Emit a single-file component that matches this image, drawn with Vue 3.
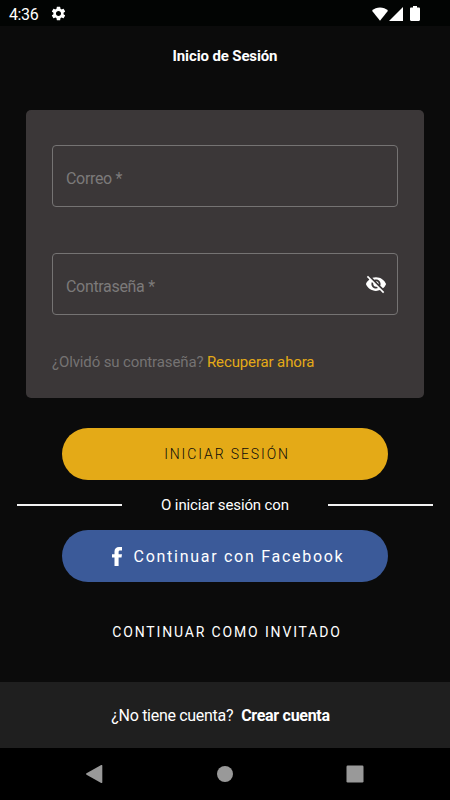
<template>
  <div class="screen">
    <header class="status-bar">
      <span class="time">4:36</span>
      <svg class="icon-settings" viewBox="0 0 24 24">
        <path d="M19.14 12.94c.04-.3.06-.61.06-.94 0-.32-.02-.64-.07-.94l2.03-1.58a.49.49 0 0 0 .12-.61l-1.92-3.32a.488.488 0 0 0-.59-.22l-2.39.96c-.5-.38-1.03-.7-1.62-.94l-.36-2.54a.484.484 0 0 0-.48-.41h-3.84c-.24 0-.43.17-.47.41l-.36 2.54c-.59.24-1.13.57-1.62.94l-2.39-.96c-.22-.08-.47 0-.59.22L2.74 8.87c-.12.21-.08.47.12.61l2.03 1.58c-.05.3-.09.63-.09.94s.02.64.07.94l-2.03 1.58a.49.49 0 0 0-.12.61l1.92 3.32c.12.22.37.29.59.22l2.39-.96c.5.38 1.03.7 1.62.94l.36 2.54c.05.24.24.41.48.41h3.84c.24 0 .44-.17.47-.41l.36-2.54c.59-.24 1.13-.56 1.62-.94l2.39.96c.22.08.47 0 .59-.22l1.92-3.32c.12-.22.07-.47-.12-.61l-2.01-1.58zM12 15.6c-1.98 0-3.6-1.62-3.6-3.6s1.62-3.6 3.6-3.6 3.6 1.62 3.6 3.6-1.62 3.6-3.6 3.6z" />
      </svg>
      <div class="indicators">
        <svg class="icon-wifi" viewBox="0 0 16 14"><path d="M8 13.7 0 3.8C2.2 1.6 5 .5 8 .5s5.800 1.100 8 3.300z" /></svg>
        <svg class="icon-signal" viewBox="0 0 14 14"><path d="M0 14 14 0v14z" /></svg>
        <svg class="icon-battery" viewBox="0 0 10 15"><path d="M3 0h4v1.500h1.800c.7 0 1.200.5 1.200 1.200v11.100c0 .7-.5 1.200-1.200 1.200H1.200C.5 15 0 14.500 0 13.800V2.700c0-.7.5-1.200 1.200-1.200H3z" /></svg>
      </div>
    </header>

    <h1 class="title">Inicio de Sesión</h1>

    <section class="card">
      <div v-for="field in fields" :key="field.name" class="field">
        <span class="field-label">{{ field.label }} *</span>
        <svg v-if="field.secret" class="icon-eye" viewBox="0 0 24 24">
          <path d="M12 7c2.760 0 5 2.240 5 5 0 .65-.13 1.260-.36 1.830l2.920 2.920c1.510-1.260 2.700-2.890 3.430-4.750-1.730-4.390-6-7.500-11-7.500-1.400 0-2.740.25-3.980.7l2.160 2.160C10.740 7.130 11.350 7 12 7zM2 4.270l2.280 2.280.46.46A11.804 11.804 0 0 0 1 12c1.730 4.390 6 7.500 11 7.500 1.550 0 3.030-.3 4.380-.84l.42.42L19.730 22 21 20.730 3.270 3 2 4.270zM7.530 9.800l1.550 1.550c-.05.21-.08.43-.08.65 0 1.660 1.340 3 3 3 .22 0 .44-.03.65-.08l1.550 1.550c-.67.33-1.410.53-2.200.53-2.760 0-5-2.240-5-5 0-.79.2-1.530.53-2.200zm4.310-.78 3.150 3.150.02-.16c0-1.660-1.340-3-3-3l-.17.01z" />
        </svg>
      </div>
      <p class="recover">¿Olvidó su contraseña? <a class="recover-link">Recuperar ahora</a></p>
    </section>

    <button class="btn btn-login">INICIAR SESIÓN</button>

    <div class="divider">
      <span class="line"></span>
      <span>O iniciar sesión con</span>
      <span class="line"></span>
    </div>

    <button class="btn btn-facebook">
      <svg class="icon-facebook" viewBox="0 0 10 19"><path d="M2.500 19V10.600H0V7.200h2.500V4.600C2.500 1.600 4.300 0 7 0h3v3.500H8.200c-1.200 0-1.600.6-1.600 1.500v2.200H10l-.5 3.400H6.600V19z" /></svg>
      <span>Continuar con Facebook</span>
    </button>

    <button class="guest">CONTINUAR COMO INVITADO</button>

    <footer class="register">
      <span>¿No tiene cuenta?</span>
      <a class="register-link">Crear cuenta</a>
    </footer>

    <nav class="nav-bar">
      <svg viewBox="0 0 18 18"><path d="M.5 8.300 15.200.1c.6-.3 1.100 0 1.100.6v16.600c0 .6-.5.900-1.100.6L.5 9.700c-.6-.4-.6-1 0-1.400z" /></svg>
      <svg viewBox="0 0 18 18"><circle cx="9" cy="9" r="8" /></svg>
      <svg viewBox="0 0 18 18"><rect x="0.500" y="0.500" width="17" height="17" rx="1.200" /></svg>
    </nav>
  </div>
</template>

<script setup>
const fields = [
  { name: 'email', label: 'Correo', secret: false },
  { name: 'password', label: 'Contraseña', secret: true }
];
</script>

<style>
body {
  margin: 0;
  background: #0b0b0b;
}
</style>

<style scoped>
.screen {
  display: flex;
  flex-direction: column;
  align-items: center;
  width: 450px;
  height: 800px;
  overflow: hidden;
  background: #0b0b0b;
  color: #fff;
  font-family: Roboto, sans-serif;
  font-size: 15px;
  letter-spacing: -0.13px;
}

svg {
  display: block;
  fill: #fff;
}

button {
  border: none;
  padding: 0;
  font-family: inherit;
}

.status-bar {
  display: flex;
  align-items: center;
  box-sizing: border-box;
  width: 100%;
  height: 26px;
  padding: 1px 30px 0 9px;
  background: #020403;
}

.time {
  width: 41px;
  padding-top: 1px;
  font-size: 16px;
  letter-spacing: -0.4px;
}

.icon-settings {
  width: 17px;
  height: 17px;
}

.indicators {
  display: flex;
  align-items: center;
  margin-left: auto;
}

.icon-wifi {
  width: 16px;
  height: 14px;
}

.icon-signal {
  width: 14px;
  height: 14px;
  margin: 0 7px 0 1px;
}

.icon-battery {
  width: 10px;
  height: 15px;
}

.title {
  margin: 20px 0 0;
  font-size: 15px;
  font-weight: 700;
  line-height: 20px;
}

.card {
  box-sizing: border-box;
  width: 398px;
  height: 288px;
  margin-top: 44px;
  padding: 35px 26px 0;
  border-radius: 5px;
  background: #3b3738;
}

.field {
  display: flex;
  align-items: center;
  justify-content: space-between;
  box-sizing: border-box;
  height: 62px;
  margin-bottom: 46px;
  padding: 0 10px 0 13px;
  border: 1px solid #757373;
  border-radius: 4px;
}

.field-label {
  padding-top: 4px;
  color: #7c7a7a;
  font-size: 16px;
  letter-spacing: -0.32px;
}

.icon-eye {
  width: 22px;
  height: 22px;
}

.recover {
  margin: -9px 0 0;
  color: #757373;
  line-height: 20px;
}

.recover-link {
  color: #e4aa17;
}

.btn {
  display: flex;
  align-items: center;
  justify-content: center;
  box-sizing: border-box;
  width: 326px;
  height: 52px;
  border-radius: 26px;
}

.btn-login {
  margin-top: 30px;
  padding-left: 4px;
  background: #e4aa17;
  color: #0b0b0b;
  font-size: 14px;
  font-weight: 300;
  letter-spacing: 1.9px;
}

.divider {
  display: flex;
  align-items: center;
  justify-content: space-between;
  width: 416px;
  height: 50px;
}

.line {
  width: 105px;
  height: 2px;
  background: #f2f2f2;
}

.btn-facebook {
  gap: 12px;
  padding-left: 6px;
  background: #3b5a99;
  color: #fff;
  font-size: 16px;
  letter-spacing: 1.72px;
}

.icon-facebook {
  width: 10px;
  height: 19px;
}

.guest {
  margin-top: 40px;
  padding-left: 4px;
  background: none;
  color: #fff;
  font-size: 14px;
  line-height: 20px;
  letter-spacing: 1.85px;
}

.register {
  display: flex;
  align-items: center;
  justify-content: center;
  gap: 8px;
  box-sizing: border-box;
  width: 100%;
  height: 66px;
  margin-top: 40px;
  padding: 1px 9px 0 0;
  background: #1f1f1f;
  font-size: 16px;
  letter-spacing: -0.3px;
}

.register-link {
  font-weight: 700;
}

.nav-bar {
  display: flex;
  align-items: center;
  justify-content: space-between;
  box-sizing: border-box;
  width: 100%;
  height: 52px;
  padding: 0 86px;
  background: #000;
}

.nav-bar svg {
  width: 18px;
  height: 18px;
  fill: #999;
}
</style>
